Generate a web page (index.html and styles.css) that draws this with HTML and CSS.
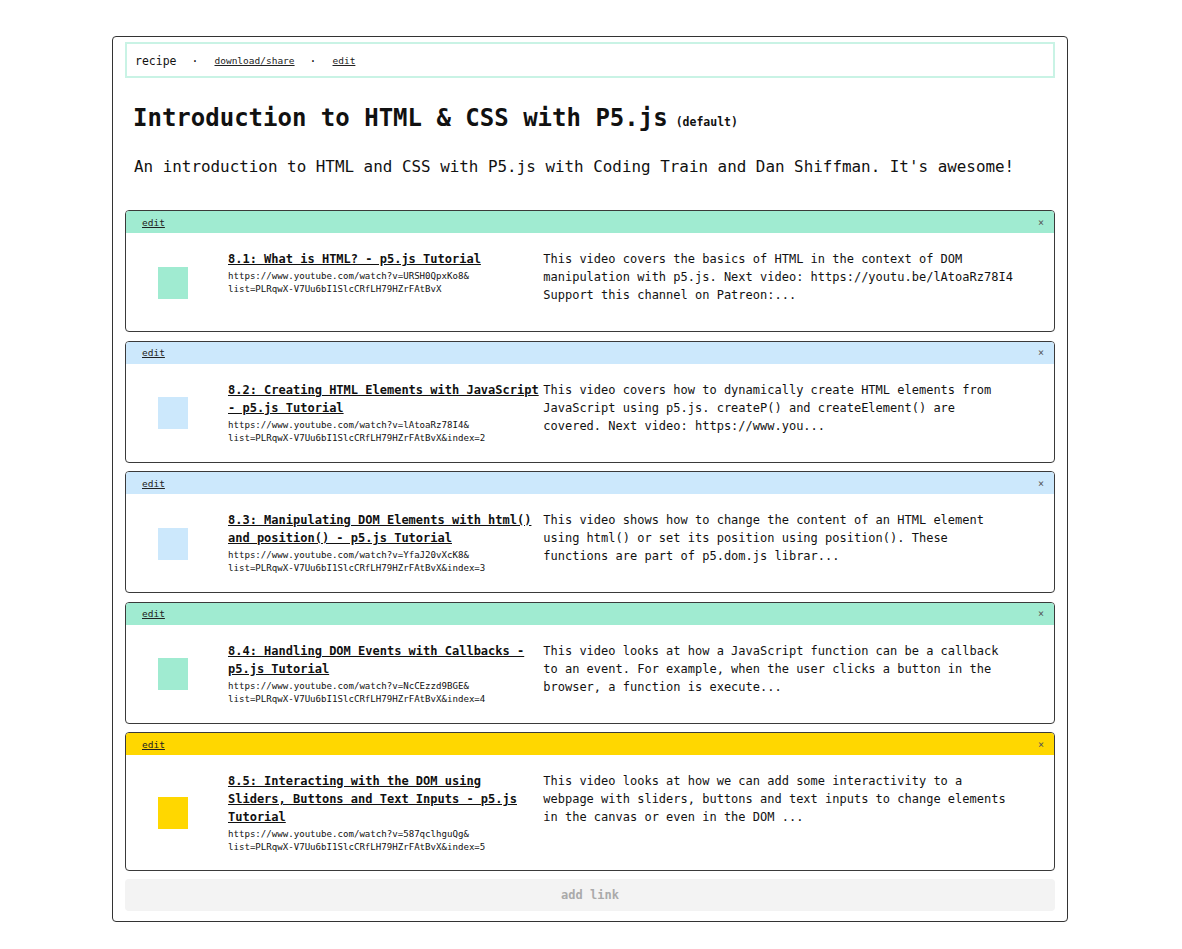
FILE: index.html
```html
<!DOCTYPE html>
<html>
<head>
<meta charset="utf-8">
<link rel="stylesheet" href="styles.css">
</head>
<body>
<div class="frame">
  <nav class="nav">
    <span class="nav-label">recipe</span>
    <span class="nav-dot">·</span>
    <a class="nav-link" href="#">download/share</a>
    <span class="nav-dot">·</span>
    <a class="nav-link" href="#">edit</a>
  </nav>

  <h1 class="title">Introduction to HTML &amp; CSS with P5.js<small class="title-tag">(default)</small></h1>
  <p class="intro">An introduction to HTML and CSS with P5.js with Coding Train and Dan Shiffman. It's awesome!</p>

  <div class="cards">
    <section class="card mint">
      <header class="card-head"><a class="card-edit" href="#">edit</a><span class="card-close">×</span></header>
      <div class="card-body">
        <div class="swatch"></div>
        <div class="card-main">
          <a class="card-title" href="#">8.1: What is HTML? - p5.js Tutorial</a>
          <div class="card-url"><span>https://www.youtube.com/watch?v=URSH0QpxKo8&amp;</span><span>list=PLRqwX-V7Uu6bI1SlcCRfLH79HZrFAtBvX</span></div>
        </div>
        <p class="card-desc">This video covers the basics of HTML in the context of DOM manipulation with p5.js. Next video: https://youtu.be/lAtoaRz78I4 Support this channel on Patreon:...</p>
      </div>
    </section>

    <section class="card blue">
      <header class="card-head"><a class="card-edit" href="#">edit</a><span class="card-close">×</span></header>
      <div class="card-body">
        <div class="swatch"></div>
        <div class="card-main">
          <a class="card-title" href="#">8.2: Creating HTML Elements with JavaScript - p5.js Tutorial</a>
          <div class="card-url"><span>https://www.youtube.com/watch?v=lAtoaRz78I4&amp;</span><span>list=PLRqwX-V7Uu6bI1SlcCRfLH79HZrFAtBvX&amp;index=2</span></div>
        </div>
        <p class="card-desc">This video covers how to dynamically create HTML elements from JavaScript using p5.js. createP() and createElement() are covered. Next video: https://www.you...</p>
      </div>
    </section>

    <section class="card blue">
      <header class="card-head"><a class="card-edit" href="#">edit</a><span class="card-close">×</span></header>
      <div class="card-body">
        <div class="swatch"></div>
        <div class="card-main">
          <a class="card-title" href="#">8.3: Manipulating DOM Elements with html() and position() - p5.js Tutorial</a>
          <div class="card-url"><span>https://www.youtube.com/watch?v=YfaJ20vXcK8&amp;</span><span>list=PLRqwX-V7Uu6bI1SlcCRfLH79HZrFAtBvX&amp;index=3</span></div>
        </div>
        <p class="card-desc">This video shows how to change the content of an HTML element using html() or set its position using position(). These functions are part of p5.dom.js librar...</p>
      </div>
    </section>

    <section class="card mint">
      <header class="card-head"><a class="card-edit" href="#">edit</a><span class="card-close">×</span></header>
      <div class="card-body">
        <div class="swatch"></div>
        <div class="card-main">
          <a class="card-title" href="#">8.4: Handling DOM Events with Callbacks - p5.js Tutorial</a>
          <div class="card-url"><span>https://www.youtube.com/watch?v=NcCEzzd9BGE&amp;</span><span>list=PLRqwX-V7Uu6bI1SlcCRfLH79HZrFAtBvX&amp;index=4</span></div>
        </div>
        <p class="card-desc">This video looks at how a JavaScript function can be a callback to an event. For example, when the user clicks a button in the browser, a function is execute...</p>
      </div>
    </section>

    <section class="card yellow">
      <header class="card-head"><a class="card-edit" href="#">edit</a><span class="card-close">×</span></header>
      <div class="card-body">
        <div class="swatch"></div>
        <div class="card-main">
          <a class="card-title" href="#">8.5: Interacting with the DOM using Sliders, Buttons and Text Inputs - p5.js Tutorial</a>
          <div class="card-url"><span>https://www.youtube.com/watch?v=587qclhguQg&amp;</span><span>list=PLRqwX-V7Uu6bI1SlcCRfLH79HZrFAtBvX&amp;index=5</span></div>
        </div>
        <p class="card-desc">This video looks at how we can add some interactivity to a webpage with sliders, buttons and text inputs to change elements in the canvas or even in the DOM ...</p>
      </div>
    </section>

    <button class="add-link">add link</button>
  </div>
</div>
</body>
</html>
```

FILE: styles.css
```css
html, body {
  margin: 0;
  padding: 0;
  background: #fff;
}

body {
  font-family: "DejaVu Sans Mono", "Liberation Mono", monospace;
  color: #111;
}

.frame {
  box-sizing: border-box;
  width: 956px;
  margin: 36px 0 0 calc(50% - 479px);
  padding: 5px 12px 10px;
  border: 1px solid #333;
  border-radius: 4px;
}

.nav {
  display: flex;
  align-items: center;
  height: 32px;
  padding: 0 8px;
  border: 2px solid #c9f3e5;
}

.nav-label {
  font-size: 11.5px;
  line-height: 16px;
  padding-top: 2px;
}

.nav-dot {
  font-size: 11.5px;
  line-height: 16px;
  padding-top: 2px;
  margin: 0 16px 0 15px;
}

.nav-link {
  font-size: 9.5px;
  line-height: 16px;
  padding-top: 2px;
  color: #222;
  text-decoration: underline;
}

.title {
  margin: 26px 0 0;
  padding: 0 8px;
  font-size: 24px;
  line-height: 28px;
  font-weight: bold;
}

.title-tag {
  font-size: 11.5px;
  font-weight: bold;
  margin-left: 8px;
}

.intro {
  margin: 21px 0 33px;
  padding: 0 9px;
  font-size: 15.9px;
  line-height: 20px;
}

.cards {
  display: flex;
  flex-direction: column;
  gap: 8.5px;
}

.card {
  border: 1px solid #3a3a3a;
  border-radius: 4px;
  overflow: hidden;
}

.card-head {
  display: flex;
  align-items: center;
  justify-content: space-between;
  height: 22px;
  padding: 0 10px 0 16px;
}

.card-edit {
  font-size: 9.5px;
  color: #222;
  text-decoration: underline;
}

.card-close {
  font-size: 10px;
  color: #555;
}

.card-body {
  box-sizing: border-box;
  display: flex;
  align-items: flex-start;
  min-height: 98px;
  padding: 17px 0 16px 32px;
}

.swatch {
  flex: none;
  width: 30px;
  height: 32px;
  align-self: center;
  margin-right: 40px;
}

.card-main {
  flex: none;
  width: 43.5ch;
  font-size: 12px;
}

.card-title {
  font-size: 12px;
  line-height: 18px;
  font-weight: bold;
  color: #111;
  text-decoration: underline;
}

.card-url {
  margin-top: 2px;
  font-size: 9.1px;
  line-height: 13px;
}

.card-url span {
  display: block;
  white-space: nowrap;
}

.card-desc {
  flex: none;
  margin: 0 0 0 1px;
  width: 65.5ch;
  font-size: 12px;
  line-height: 18px;
}

.mint .card-head,
.mint .swatch {
  background: #a0ebd1;
}

.blue .card-head,
.blue .swatch {
  background: #cce8fc;
}

.yellow .card-head,
.yellow .swatch {
  background: #ffd700;
}

.add-link {
  display: block;
  width: 100%;
  height: 32px;
  margin-top: -0.5px;
  border: none;
  border-radius: 4px;
  background: #f3f3f3;
  color: #aaa;
  font-family: "DejaVu Sans Mono", "Liberation Mono", monospace;
  font-size: 12px;
  font-weight: bold;
}
```
